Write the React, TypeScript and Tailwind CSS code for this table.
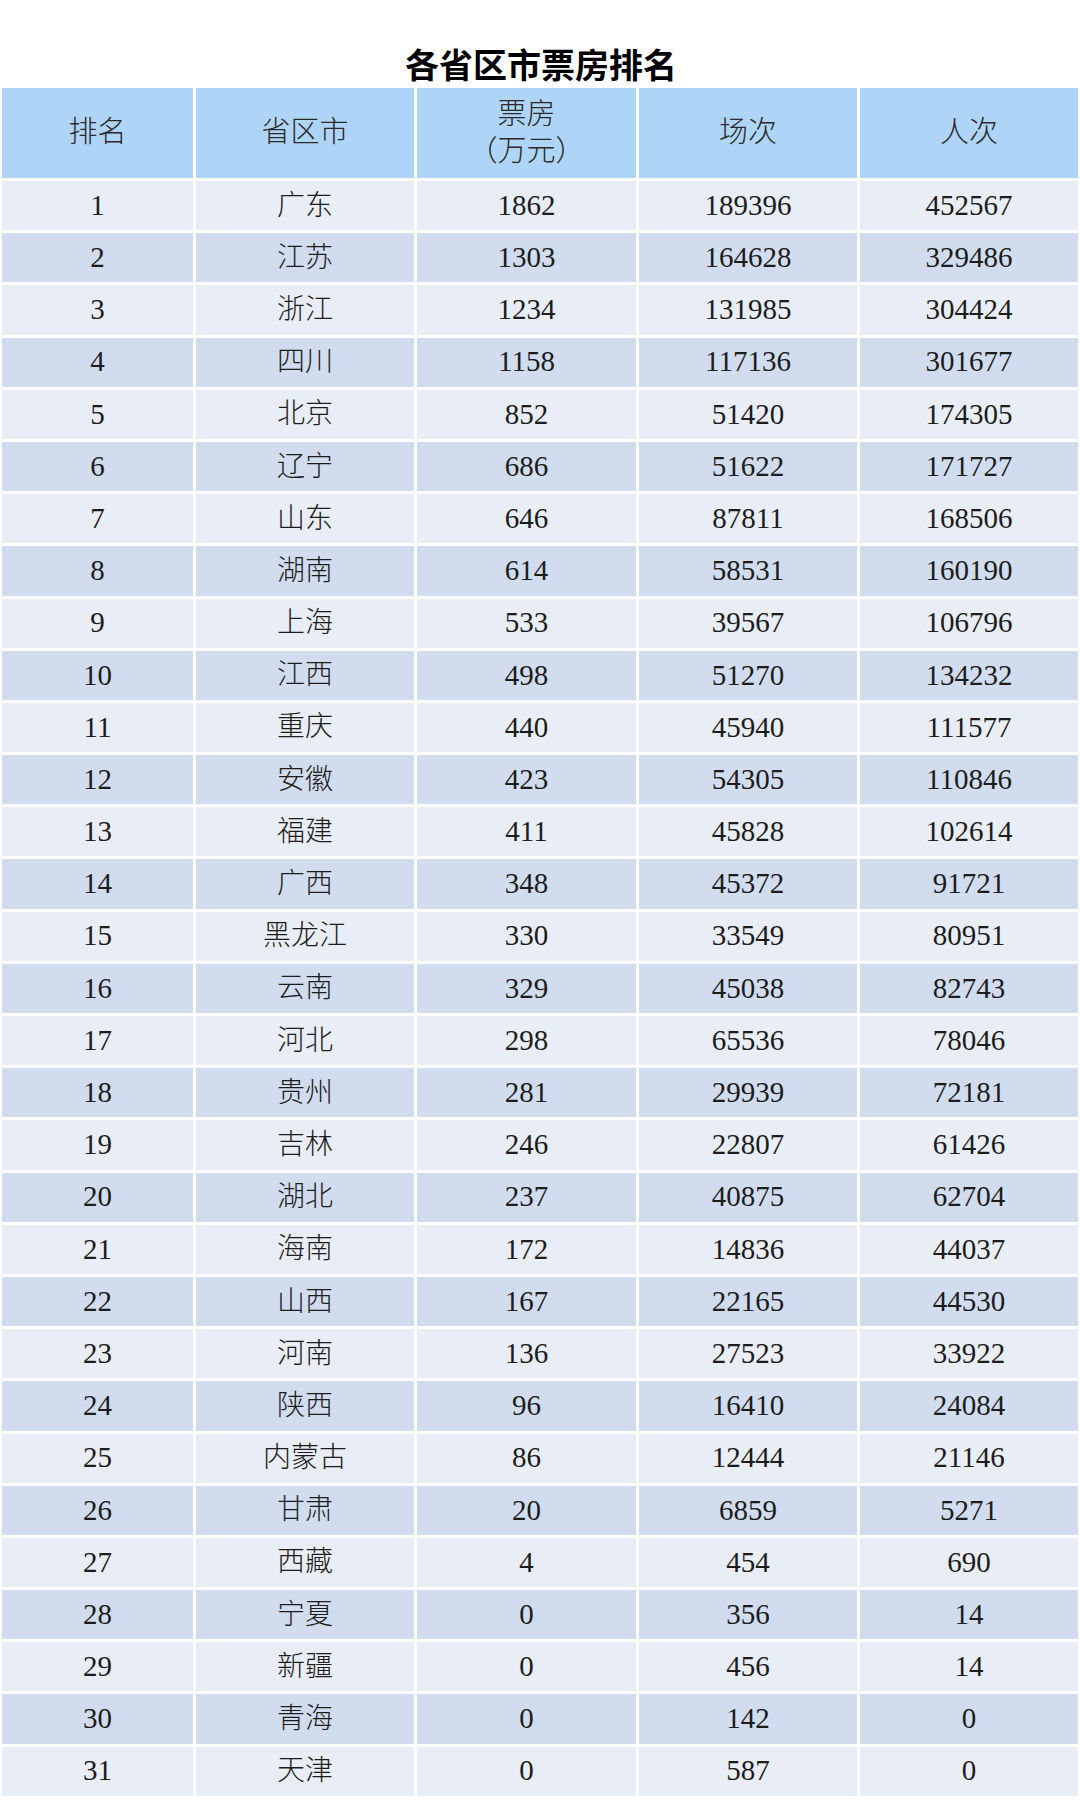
const rows: [string, number, number, number][] = [
  ["广东", 1862, 189396, 452567],
  ["江苏", 1303, 164628, 329486],
  ["浙江", 1234, 131985, 304424],
  ["四川", 1158, 117136, 301677],
  ["北京", 852, 51420, 174305],
  ["辽宁", 686, 51622, 171727],
  ["山东", 646, 87811, 168506],
  ["湖南", 614, 58531, 160190],
  ["上海", 533, 39567, 106796],
  ["江西", 498, 51270, 134232],
  ["重庆", 440, 45940, 111577],
  ["安徽", 423, 54305, 110846],
  ["福建", 411, 45828, 102614],
  ["广西", 348, 45372, 91721],
  ["黑龙江", 330, 33549, 80951],
  ["云南", 329, 45038, 82743],
  ["河北", 298, 65536, 78046],
  ["贵州", 281, 29939, 72181],
  ["吉林", 246, 22807, 61426],
  ["湖北", 237, 40875, 62704],
  ["海南", 172, 14836, 44037],
  ["山西", 167, 22165, 44530],
  ["河南", 136, 27523, 33922],
  ["陕西", 96, 16410, 24084],
  ["内蒙古", 86, 12444, 21146],
  ["甘肃", 20, 6859, 5271],
  ["西藏", 4, 454, 690],
  ["宁夏", 0, 356, 14],
  ["新疆", 0, 456, 14],
  ["青海", 0, 142, 0],
  ["天津", 0, 587, 0],
];

const cols = "grid grid-cols-[191px_218px_219px_218px_218px] gap-x-[3px]";

export default function App() {
  return (
    <div className="w-[1080px] bg-white pl-[2px] font-['Liberation_Serif','Noto_Sans_CJK_SC',serif] text-[#1c1c1c]">
      <h1 className="pt-[40px] text-center font-['Noto_Sans_CJK_SC',sans-serif] text-[34px] font-bold leading-[48px] text-black">
        各省区市票房排名
      </h1>
      <div className="flex flex-col gap-y-[3px]">
        <div className={`${cols} h-[90px] text-[29px] font-light text-[#2a2a2a]`}>
          <div className="flex items-center justify-center bg-[#aed4f8]">排名</div>
          <div className="flex items-center justify-center bg-[#aed4f8]">省区市</div>
          <div className="flex flex-col items-center justify-center bg-[#aed4f8] leading-[37px]">
            <span>票房</span>
            <span>（万元）</span>
          </div>
          <div className="flex items-center justify-center bg-[#aed4f8]">场次</div>
          <div className="flex items-center justify-center bg-[#aed4f8]">人次</div>
        </div>
        {rows.map(([name, box, shows, people], i) => (
          <div
            key={name}
            className={`${cols} h-[49.2px] text-[29px] ${i % 2 === 0 ? "*:bg-[#e9edf6]" : "*:bg-[#d1ddef]"}`}
          >
            <div className="flex items-center justify-center">{i + 1}</div>
            <div className="flex items-center justify-center text-[28px] font-light">{name}</div>
            <div className="flex items-center justify-center">{box}</div>
            <div className="flex items-center justify-center">{shows}</div>
            <div className="flex items-center justify-center">{people}</div>
          </div>
        ))}
      </div>
    </div>
  );
}
